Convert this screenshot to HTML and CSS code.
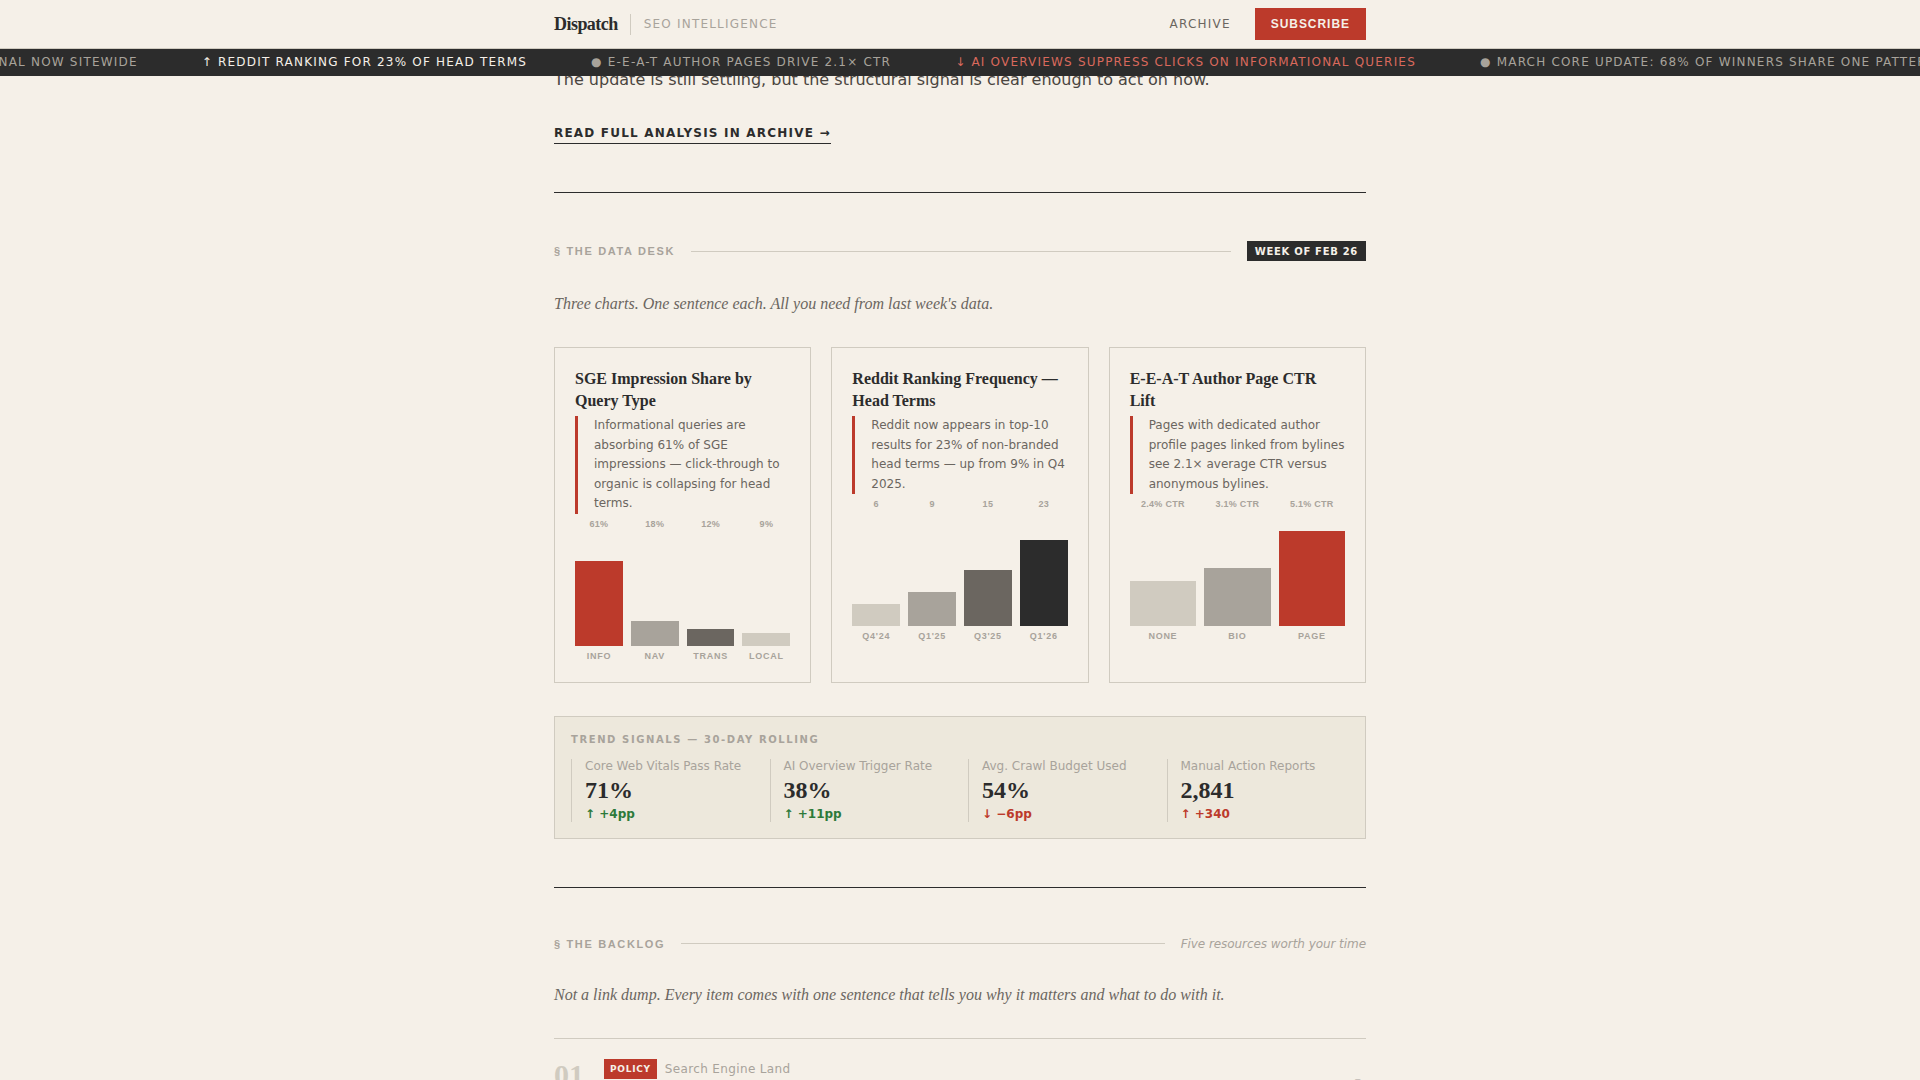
FILE: index.html
```html
<!DOCTYPE html>
<html lang="en">
<head>
    <meta charset="UTF-8">
    <title>Dispatch - SEO Intelligence</title>
    <link rel="stylesheet" href="styles.css">
</head>
<body>

<!-- Nav -->
<header class="nav">
    <div class="nav-inner">
        <div class="brand">
            <span class="brand-name">Dispatch</span>
            <span class="brand-tag">SEO Intelligence</span>
        </div>
        <div class="nav-links">
            <a class="nav-link" href="#">Archive</a>
            <a class="subscribe-btn" href="#">Subscribe</a>
        </div>
    </div>
</header>

<!-- Ticker -->
<div class="ticker">
    <div class="ticker-track">
        <span>● Helpful content signal now sitewide</span>
        <span class="up">↑ Reddit ranking for 23% of head terms</span>
        <span>● E-E-A-T author pages drive 2.1× CTR</span>
        <span class="down">↓ AI Overviews suppress clicks on informational queries</span>
        <span>● March core update: 68% of winners share one pattern</span>
    </div>
</div>

<main class="page">
    <p class="lead">The update is still settling, but the structural signal is clear enough to act on now.</p>
    <a class="read-more" href="#">Read full analysis in archive →</a>

    <hr class="rule">

    <!-- Data desk -->
    <section>
        <div class="section-head">
            <span class="section-label">§ The Data Desk</span>
            <span class="section-line"></span>
            <span class="week-badge">Week of Feb 26</span>
        </div>
        <p class="section-intro">Three charts. One sentence each. All you need from last week's data.</p>

        <div class="charts">
            <div class="chart-card">
                <h3>SGE Impression Share by Query Type</h3>
                <p class="chart-note">Informational queries are absorbing 61% of SGE impressions — click-through to organic is collapsing for head terms.</p>
                <div class="bars">
                    <div class="bar-col"><span class="bar-value">61%</span><div class="bar red" style="height: 85px"></div><span class="bar-label">Info</span></div>
                    <div class="bar-col"><span class="bar-value">18%</span><div class="bar mid" style="height: 25px"></div><span class="bar-label">Nav</span></div>
                    <div class="bar-col"><span class="bar-value">12%</span><div class="bar dark" style="height: 17px"></div><span class="bar-label">Trans</span></div>
                    <div class="bar-col"><span class="bar-value">9%</span><div class="bar light" style="height: 13px"></div><span class="bar-label">Local</span></div>
                </div>
            </div>

            <div class="chart-card">
                <h3>Reddit Ranking Frequency — Head Terms</h3>
                <p class="chart-note">Reddit now appears in top-10 results for 23% of non-branded head terms — up from 9% in Q4 2025.</p>
                <div class="bars">
                    <div class="bar-col"><span class="bar-value">6</span><div class="bar light" style="height: 22px"></div><span class="bar-label">Q4'24</span></div>
                    <div class="bar-col"><span class="bar-value">9</span><div class="bar mid" style="height: 34px"></div><span class="bar-label">Q1'25</span></div>
                    <div class="bar-col"><span class="bar-value">15</span><div class="bar dark" style="height: 56px"></div><span class="bar-label">Q3'25</span></div>
                    <div class="bar-col"><span class="bar-value">23</span><div class="bar black" style="height: 86px"></div><span class="bar-label">Q1'26</span></div>
                </div>
            </div>

            <div class="chart-card">
                <h3>E-E-A-T Author Page CTR Lift</h3>
                <p class="chart-note">Pages with dedicated author profile pages linked from bylines see 2.1× average CTR versus anonymous bylines.</p>
                <div class="bars">
                    <div class="bar-col"><span class="bar-value">2.4% CTR</span><div class="bar light" style="height: 45px"></div><span class="bar-label">None</span></div>
                    <div class="bar-col"><span class="bar-value">3.1% CTR</span><div class="bar mid" style="height: 58px"></div><span class="bar-label">Bio</span></div>
                    <div class="bar-col"><span class="bar-value">5.1% CTR</span><div class="bar red" style="height: 95px"></div><span class="bar-label">Page</span></div>
                </div>
            </div>
        </div>

        <!-- Trend signals -->
        <div class="trends">
            <div class="trends-title">Trend Signals — 30-Day Rolling</div>
            <div class="trends-grid">
                <div class="trend">
                    <div class="trend-label">Core Web Vitals Pass Rate</div>
                    <div class="trend-value">71%</div>
                    <div class="trend-delta good">↑ +4pp</div>
                </div>
                <div class="trend">
                    <div class="trend-label">AI Overview Trigger Rate</div>
                    <div class="trend-value">38%</div>
                    <div class="trend-delta good">↑ +11pp</div>
                </div>
                <div class="trend">
                    <div class="trend-label">Avg. Crawl Budget Used</div>
                    <div class="trend-value">54%</div>
                    <div class="trend-delta bad">↓ −6pp</div>
                </div>
                <div class="trend">
                    <div class="trend-label">Manual Action Reports</div>
                    <div class="trend-value">2,841</div>
                    <div class="trend-delta bad">↑ +340</div>
                </div>
            </div>
        </div>
    </section>

    <hr class="rule">

    <!-- Backlog -->
    <section>
        <div class="section-head">
            <span class="section-label">§ The Backlog</span>
            <span class="section-line"></span>
            <span class="section-note">Five resources worth your time</span>
        </div>
        <p class="section-intro">Not a link dump. Every item comes with one sentence that tells you why it matters and what to do with it.</p>

        <div class="backlog-item">
            <span class="backlog-num">01</span>
            <div class="backlog-body">
                <span class="tag">Policy</span>
                <span class="backlog-source">Search Engine Land</span>
            </div>
            <span class="backlog-arrow">↗</span>
        </div>
    </section>
</main>

</body>
</html>
```

FILE: styles.css
```css
* {
    box-sizing: border-box;
}

html, body {
    height: 1080px;
    overflow: hidden;
}

body {
    margin: 0;
    background-color: #f5f0e8;
    color: #2c2c2c;
    font-family: 'DejaVu Sans', sans-serif;
}

a {
    text-decoration: none;
    color: inherit;
}

/* Nav */
.nav {
    position: relative;
    z-index: 3;
    height: 49px;
    background-color: #f5f0e8;
    border-bottom: 1px solid #d0cbc0;
}

.nav-inner {
    width: 812px;
    height: 48px;
    margin: 0 auto;
    display: flex;
    align-items: center;
    justify-content: space-between;
}

.brand {
    display: flex;
    align-items: center;
}

.brand-name {
    font-family: 'Liberation Serif', serif;
    font-size: 18px;
    font-weight: 700;
    letter-spacing: -0.03em;
    padding-right: 12px;
    border-right: 1px solid #d0cbc0;
}

.brand-tag {
    padding-left: 13px;
    font-size: 12px;
    letter-spacing: 0.1em;
    text-transform: uppercase;
    color: #a8a39b;
}

.nav-links {
    display: flex;
    align-items: center;
    gap: 24px;
}

.nav-link {
    font-size: 12px;
    letter-spacing: 0.1em;
    text-transform: uppercase;
    color: #6b6660;
}

.subscribe-btn {
    display: flex;
    align-items: center;
    height: 32px;
    padding: 0 16px;
    background-color: #bc3a2b;
    color: #f5f0e8;
    font-family: 'Liberation Sans', sans-serif;
    font-size: 12px;
    font-weight: 700;
    letter-spacing: 0.08em;
    text-transform: uppercase;
}

/* Ticker */
.ticker {
    position: relative;
    z-index: 3;
    height: 27px;
    background-color: #2c2c2c;
    overflow: hidden;
}

.ticker-track {
    display: flex;
    gap: 64px;
    height: 26px;
    align-items: center;
    margin-left: -180px;
    white-space: nowrap;
    font-size: 12px;
    letter-spacing: 0.1em;
    text-transform: uppercase;
    color: #a8a39b;
}

.ticker-track .up {
    color: #f5f0e8;
}

.ticker-track .down {
    color: #d9695c;
}

/* Page */
.page {
    width: 812px;
    margin: 0 auto;
}

.lead {
    margin: -8px 0 0;
    font-size: 16px;
    line-height: 24px;
    color: #4a4540;
}

.read-more {
    display: inline-block;
    margin-top: 34px;
    padding-bottom: 3px;
    border-bottom: 1px solid #2c2c2c;
    font-size: 12px;
    font-weight: 700;
    letter-spacing: 0.1em;
    text-transform: uppercase;
}

.rule {
    height: 1px;
    margin: 48px 0;
    border: none;
    background-color: #2c2c2c;
}

.section-head {
    display: flex;
    align-items: center;
    gap: 16px;
}

.section-label {
    font-family: 'Liberation Sans', sans-serif;
    font-size: 11px;
    font-weight: 700;
    letter-spacing: 0.15em;
    text-transform: uppercase;
    color: #a8a39b;
}

.section-line {
    flex: 1;
    height: 1px;
    background-color: #d0cbc0;
}

.week-badge {
    height: 20px;
    padding: 0 8px;
    display: flex;
    align-items: center;
    background-color: #2c2c2c;
    color: #f5f0e8;
    font-size: 10px;
    font-weight: 700;
    letter-spacing: 0.07em;
    text-transform: uppercase;
}

.section-note {
    font-size: 12px;
    font-style: italic;
    line-height: 16px;
    letter-spacing: -0.005em;
    color: #a8a39b;
}

.section-intro {
    margin: 33px 0 0;
    font-family: 'Liberation Serif', serif;
    font-size: 16px;
    font-style: italic;
    line-height: 20px;
    color: #6b6660;
}

/* Charts */
.charts {
    display: grid;
    grid-template-columns: repeat(3, 1fr);
    gap: 20px;
    margin-top: 33px;
}

.chart-card {
    padding: 20px;
    border: 1px solid #d0cbc0;
}

.chart-card h3 {
    margin: 0;
    font-family: 'Liberation Serif', serif;
    font-size: 16px;
    font-weight: 700;
    line-height: 22px;
}

.chart-note {
    margin: 4px 0 0;
    padding-left: 16px;
    border-left: 3px solid #bc3a2b;
    font-size: 12px;
    line-height: 19.6px;
    color: #6b6660;
}

.bars {
    display: flex;
    gap: 8px;
    height: 148px;
}

.bar-col {
    flex: 1;
    display: flex;
    flex-direction: column;
    text-align: center;
}

.bar-value {
    margin-bottom: auto;
    font-family: 'Liberation Sans', sans-serif;
    font-size: 9px;
    font-weight: 700;
    line-height: 20px;
    letter-spacing: 0.03em;
    color: #a8a39b;
}

.bar {
    width: 100%;
}

.bar.red { background-color: #bc3a2b; }
.bar.mid { background-color: #a8a39b; }
.bar.dark { background-color: #6b6660; }
.bar.light { background-color: #d0cbc0; }
.bar.black { background-color: #2c2c2c; }

.bar-label {
    margin-top: 5px;
    font-family: 'Liberation Sans', sans-serif;
    font-size: 9px;
    font-weight: 700;
    line-height: 11px;
    letter-spacing: 0.08em;
    text-transform: uppercase;
    color: #a8a39b;
}

/* Trend signals */
.trends {
    margin-top: 33px;
    padding: 16px;
    background-color: #ede8dc;
    border: 1px solid #d0cbc0;
}

.trends-title {
    font-size: 10px;
    font-weight: 700;
    line-height: 14px;
    letter-spacing: 0.16em;
    text-transform: uppercase;
    color: #a8a39b;
}

.trends-grid {
    display: grid;
    grid-template-columns: repeat(4, 1fr);
    gap: 16px;
    margin-top: 12px;
}

.trend {
    height: 63px;
    padding-left: 13px;
    border-left: 1px solid #d0cbc0;
}

.trend-label {
    font-size: 12px;
    line-height: 14px;
    color: #a8a39b;
}

.trend-value {
    margin-top: 3px;
    font-family: 'Liberation Serif', serif;
    font-size: 24px;
    font-weight: 700;
    line-height: 28px;
}

.trend-delta {
    margin-top: 3px;
    font-size: 12px;
    font-weight: 700;
    line-height: 14px;
}

.trend-delta.good { color: #2d7a3a; }
.trend-delta.bad { color: #bc3a2b; }

/* Backlog */
.backlog-item {
    display: flex;
    align-items: flex-start;
    gap: 20px;
    margin-top: 33px;
    padding-top: 20px;
    border-top: 1px solid #d0cbc0;
}

.backlog-num {
    font-family: 'Liberation Serif', serif;
    font-size: 30px;
    font-weight: 700;
    line-height: 32px;
    color: #d0cbc0;
}

.backlog-body {
    flex: 1;
    display: flex;
    align-items: center;
    gap: 8px;
}

.tag {
    height: 20px;
    padding: 0 6px;
    display: flex;
    align-items: center;
    background-color: #bc3a2b;
    color: #f5f0e8;
    font-size: 9px;
    font-weight: 700;
    letter-spacing: 0.08em;
    text-transform: uppercase;
}

.backlog-source {
    font-size: 12px;
    letter-spacing: 0.03em;
    color: #a8a39b;
}

.backlog-arrow {
    margin-top: 14px;
    margin-right: 3px;
    font-size: 18px;
    color: #a8a39b;
}
```
